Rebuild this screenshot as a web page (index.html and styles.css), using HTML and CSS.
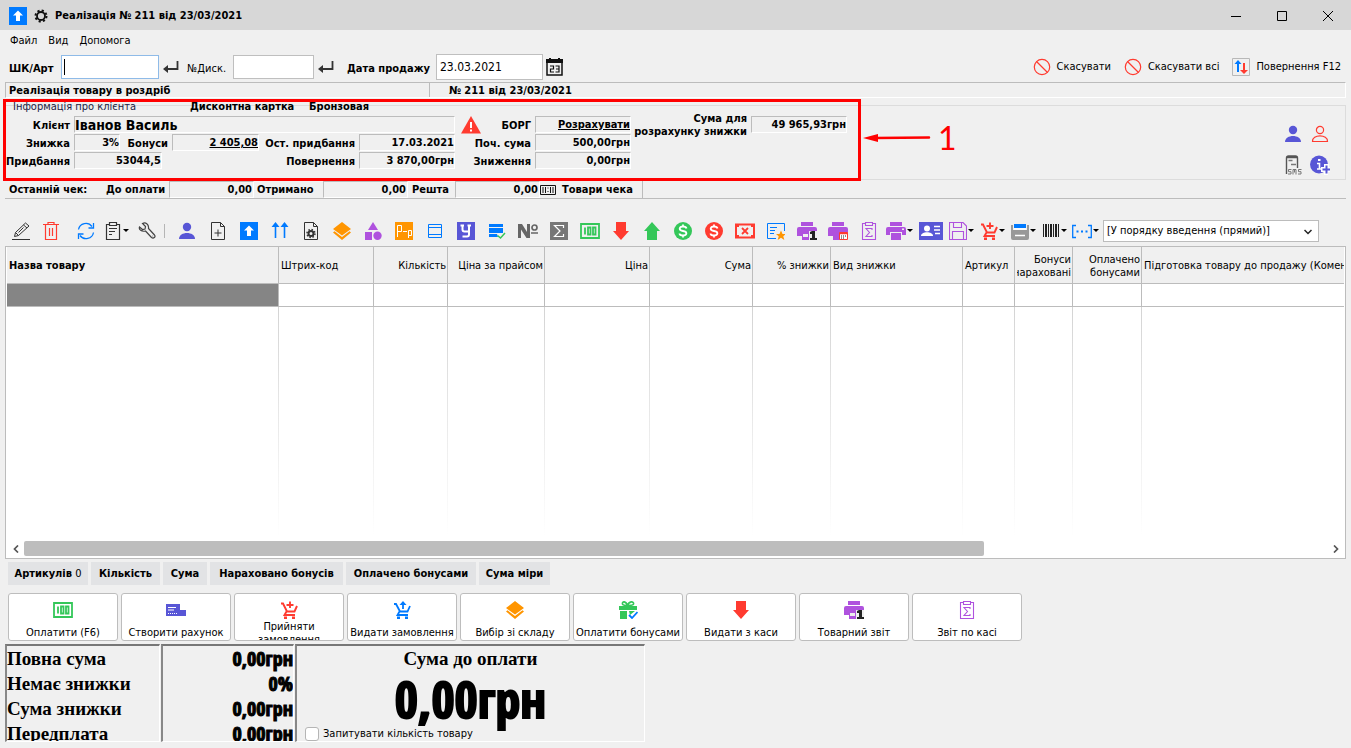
FILE: index.html
```html
<!DOCTYPE html>
<html lang="uk">
<head>
<meta charset="utf-8">
<title>Реалізація № 211 від 23/03/2021</title>
<link rel="stylesheet" href="styles.css">
</head>
<body>
<svg class="defs" aria-hidden="true">
  <symbol id="pencil" viewBox="0 0 18 18"><path d="M0 17.500h18M2.500 14.500l1-4L13.500 1l3.500 3L6.500 13.500zM3.500 10.500l3 3M11.500 3l3.500 3M6.500 10.500l5-5" fill="none" stroke="#333"/></symbol>
  <symbol id="trash" viewBox="0 0 18 18"><path d="M1 2.500h16M6 2V.500h6V2M3.500 3v14.500h11V3M7.500 6v8M10.500 6v8" fill="none" stroke="#ff3b30" stroke-width="1.200"/></symbol>
  <symbol id="refresh" viewBox="0 0 18 18"><path d="M1.500 7.500a7.500 7.500 0 0 1 13.500-3M16.500 1v5h-5M16.500 10.500a7.500 7.500 0 0 1-13.500 3M1.500 17v-5h5" fill="none" stroke="#007aff" stroke-width="1.300"/></symbol>
  <symbol id="clip" viewBox="0 0 18 18"><path d="M5 2.500H2.500v15h13v-15H13M5.500.500h7v3h-7zM5 6.500h8M5 9.500h6M5 12.500h3" fill="none" stroke="#333" stroke-width="1.200"/></symbol>
  <symbol id="wrench" viewBox="0 0 18 18"><path d="M1.500 5l3 2.500 2.500-.500.500-2.500-3-3c3-1.500 6.500.500 6 5l6 6.500c1.500 2-1 4-3 2.500l-6-6.500C3.500 10 .500 7.500 1.500 5zM14.500 14h.600" fill="none" stroke="#444" stroke-width="1.200"/></symbol>
  <symbol id="person" viewBox="0 0 18 18"><circle cx="9" cy="5" r="4.200"/><path d="M1 17c0-8 16-8 16 0z"/></symbol>
  <symbol id="person-line" viewBox="0 0 18 18"><circle cx="9" cy="5" r="3.600" fill="none"/><path d="M1.500 16.500c-.500-7.500 15.500-7.500 15 0z" fill="none"/></symbol>
  <symbol id="newpage" viewBox="0 0 18 18"><path d="M2.500.500h9l4 4v13h-13zM11.500.500v4h4M9 7.500v7M5.500 11h7" fill="none" stroke="#333"/></symbol>
  <symbol id="upbox" viewBox="0 0 18 18"><path fill="#007aff" d="M0 0h18v18H0z"/><path fill="#fff" d="M9 3.500l5 5h-3V14H7V8.500H4z"/></symbol>
  <symbol id="upup" viewBox="0 0 18 18"><path d="M4.500 2v14M13.500 2v14" stroke="#007aff" stroke-width="1.600"/><path fill="#007aff" d="M4.500 0l4 5h-8zM13.500 0l4 5h-8z"/></symbol>
  <symbol id="gearpage" viewBox="0 0 18 18"><path d="M2.500.500h9l4 4v13h-13zM11.500.500v4h4" fill="none" stroke="#333"/><circle cx="9" cy="11.500" r="2.500" fill="none" stroke="#333" stroke-width="2"/><circle cx="9" cy="11.500" r="4" fill="none" stroke="#333" stroke-width="1.500" stroke-dasharray="1.500 1.640"/></symbol>
  <symbol id="layers" viewBox="0 0 18 18"><path fill="#ff9500" d="M9 0l9 7-9 6.500L0 7zM0 10.500l1.500-1.200L9 15l7.500-5.700 1.500 1.200L9 18z"/></symbol>
  <symbol id="shapes" viewBox="0 0 18 18"><path fill="#af52de" d="M9 0l5 8H4zM1 10h7v8H1z"/><circle cx="13.500" cy="13.800" r="4.200" fill="#af52de"/></symbol>
  <symbol id="pp" viewBox="0 0 18 18"><path fill="#ff9500" d="M0 0h18v18H0z"/><path d="M2.500 15V3.500h4v6h-4M8 9.500h4M13.500 16V8.500h3v5h-3" fill="none" stroke="#fff"/></symbol>
  <symbol id="rows" viewBox="0 0 18 18"><path d="M2.500 2.500h13v13h-13zM2.500 5.500h13M2.500 12.500h13" fill="none" stroke="#007aff"/></symbol>
  <symbol id="ybox" viewBox="0 0 18 18"><path fill="#5856d6" d="M0 0h18v18H0z"/><path d="M5.500 3v4.500q0 2 2 2h3.500M12 3v9.500q0 2-2 2H5.500M3.500 3.500H7M10.500 3.500H14" fill="none" stroke="#fff" stroke-width="2"/></symbol>
  <symbol id="rowcheck" viewBox="0 0 18 18"><path fill="#007aff" d="M1 2h14v3H1zM1 6h14v5H1zM1 12h8l1 3H1z"/><path d="M9.500 13.500l3 2.500 4.500-5" fill="none" stroke="#34c759" stroke-width="1.500"/></symbol>
  <symbol id="num" viewBox="0 0 22 18"><path fill="#666" d="M1 2h4l5 8V2h3v14H9.500L4 7.500V16H1z"/><circle cx="17.500" cy="5.500" r="2.500" fill="none" stroke="#666" stroke-width="1.700"/><path d="M14 11h7" stroke="#666" stroke-width="1.500"/></symbol>
  <symbol id="sigma" viewBox="0 0 18 18"><path fill="#777" d="M0 0h18v18H0z"/><path d="M13.500 6V3.500h-9L10 9l-5.500 5.500h9V12" fill="none" stroke="#fff" stroke-width="1.200"/></symbol>
  <symbol id="cash" viewBox="0 0 20 18"><path d="M1 2h18v14H1zM5 5.500v7M8 5.500h2.500v7H8zM13 5.500h2.500v7H13z" fill="none" stroke="#34c759" stroke-width="1.800"/></symbol>
  <symbol id="down" viewBox="0 0 18 18"><path fill="#ff3b30" d="M4 0h10v9h3l-8 9-8-9h3z"/></symbol>
  <symbol id="up" viewBox="0 0 18 18"><path fill="#34c759" d="M9 0l8 9h-3v9H4V9H1z"/></symbol>
  <symbol id="dollar" viewBox="0 0 18 18"><circle cx="9" cy="9" r="9"/><path d="M12.500 6.500Q12 4.500 9 4.500T5.700 6.700Q5.700 8.500 9 9T12.400 11.300Q12.400 13.500 9 13.500T5.500 11.500M9 2.500v2M9 13.500v2" fill="none" stroke="#fff" stroke-width="1.800"/></symbol>
  <symbol id="cashx" viewBox="0 0 20 18"><path d="M1 2.500h18v13H1z" fill="none" stroke="#ff3b30" stroke-width="2"/><path fill="#ff3b30" d="M1 2h3v3H1zM16 2h3v3h-3zM1 13h3v3H1zM16 13h3v3h-3z"/><path d="M7 6l6 6M13 6l-6 6" stroke="#ff3b30" stroke-width="1.800"/></symbol>
  <symbol id="liststar" viewBox="0 0 18 18"><path d="M9 16.500H.500v-15h17V9M3 5.500h7M3 8.500h5M3 11.500h4" fill="none" stroke="#007aff"/><path fill="#ff9500" d="M14 8.500l1.500 3.500H19l-2.700 2.200 1 3.800-3.300-2.200-3.300 2.200 1-3.800L9 12h3.500z"/></symbol>
  <symbol id="printer" viewBox="0 0 20 18"><path fill="#af52de" d="M4 0h12v4H4zM2 5h16q2 0 2 2v6h-4v-3H4v3H0V7q0-2 2-2zM5 11h10v7H5z"/><path fill="#efefef" d="M16 6.500h2v1.500h-2z"/></symbol>
  <symbol id="printer1" viewBox="0 0 20 18"><path fill="#af52de" d="M4 0h12v4H4zM2 5h16q2 0 2 2v4h-6v7H5v-4H0V7q0-2 2-2z"/><path fill="#efefef" d="M6 12h5v3H6zM12 9h8v9h-8z"/><path fill="#222" d="M15 9h3v7h2v2h-7v-2h2v-4h-2v-2z"/></symbol>
  <symbol id="printercal" viewBox="0 0 20 18"><path fill="#af52de" d="M4 0h12v4H4zM2 5h16q2 0 2 2v4h-8v7H5v-4H0V7q0-2 2-2z"/><path fill="#fff" stroke="#ff3b30" d="M11.500 10.500h8v7h-8z"/><path d="M11 11.500h9" stroke="#ff3b30" stroke-width="1.500"/><path d="M13 14h5M13 16h3" stroke="#222" stroke-dasharray="1 1"/></symbol>
  <symbol id="clipsigma" viewBox="0 0 18 18"><path d="M5 1.500H2.500v16h13v-16H13M5.500 0.500h7v3h-7zM12 8V6.500H6L9.500 10.500 6 14.500h6V13" fill="none" stroke="#af52de" stroke-width="1.100"/></symbol>
  <symbol id="idcard" viewBox="0 0 24 18"><path fill="#5856d6" d="M0 0h24v18H0z"/><circle cx="8" cy="6.500" r="3" fill="#fff"/><path fill="#fff" d="M2 14c0-5 12-5 12 0z"/><path d="M15 4.500h6M15 8h6M16 11.500h5" stroke="#fff" stroke-width="1.500"/></symbol>
  <symbol id="floppy" viewBox="0 0 18 18"><path d="M.500.500H14l3.500 3.500v13.500H.500zM4.500.500v5h8v-5M3.500 17.500v-8h11v8" fill="none" stroke="#af52de" stroke-width="1.100"/></symbol>
  <symbol id="cart" viewBox="0 0 18 18"><path d="M1 2.500h2l4 8h7.500L17 5M6.500 10.500L4.500 14H15M10 .500v6.500M6.500 4h7" fill="none" stroke="#ff3b30" stroke-width="1.900"/><path fill="#ff3b30" d="M4 15.500h3V18H4zM12 15.500h3V18h-3z"/></symbol>
  <symbol id="cartup" viewBox="0 0 18 18"><path d="M1 3h2l4 7.500h7.500L17 5M6.500 10.500L4.500 14H15M10 2v6" fill="none" stroke="#007aff" stroke-width="1.800"/><path fill="#007aff" d="M10 0l3.500 4h-7zM4 15.500h3V18H4zM12 15.500h3V18h-3z"/></symbol>
  <symbol id="register" viewBox="0 0 18 18"><path fill="#999" d="M0 8h18v8q0 2-2 2H2q-2 0-2-2zM0 3h2v5H0zM16 3h2v5h-2z"/><path fill="#007aff" d="M3 2h12v4H3z"/><path d="M3 7h12" stroke="#fff" stroke-width="1.500"/><path d="M4 13.500h10" stroke="#fff" stroke-width="1.500"/></symbol>
  <symbol id="barcode" viewBox="0 0 18 18"><path fill="#222" d="M1 2h1v13H1zM3 2h2v13H3zM6 2h1v13H6zM8 2h2v13H8zM11 2h1v13h-1zM13 2h2v13h-2zM16 2h1v13h-1z"/></symbol>
  <symbol id="dots" viewBox="0 0 20 18"><path d="M4 3.500H.700v12H4M16 3.500h3.300v12H16" fill="none" stroke="#007aff" stroke-width="1.300"/><path d="M4.500 9.500h2M9 9.500h2M13.500 9.500h2" stroke="#007aff" stroke-width="2"/></symbol>
  <symbol id="invoice" viewBox="0 0 20 18"><path fill="#5856d6" d="M0 3h14v6h6v6H0z"/><path d="M2 6.500h8M2 9h6" stroke="#fff"/><path d="M2 12.500h10" stroke="#fff" stroke-dasharray="1 1"/></symbol>
  <symbol id="gift" viewBox="0 0 20 18"><path fill="#34c759" d="M1 5h18v4H1zM2 10h7v8H2zM11 10h6l-5 4z"/><path d="M9.500 4.500C8 0 4 0 4.500 3q.500 1.500 5 1.500C11 0 16 0 15.500 3q-.500 1.500-6 1.500" fill="none" stroke="#34c759" stroke-width="1.700"/><path d="M11 14l3 3 5.500-6" fill="none" stroke="#007aff" stroke-width="1.800"/></symbol>
  <symbol id="stop" viewBox="0 0 18 18"><circle cx="9" cy="9" r="7.700" fill="none" stroke="#ff3b30" stroke-width="1.200"/><path d="M3.500 3.500l11 11" stroke="#ff3b30" stroke-width="1.200"/></symbol>
  <symbol id="swap" viewBox="0 0 18 18"><path d="M.500.500h17v17H.500z" fill="none" stroke="#b8b8b8"/><path fill="#007aff" d="M6 2l3.500 4H7v8H5V6H2.500z"/><path fill="#ff3b30" d="M12 16l-4-4h3V5h2v7h3z"/></symbol>
  <symbol id="enter" viewBox="0 0 16 12"><path d="M14.500 0v8H4" fill="none" stroke="#333" stroke-width="1.800"/><path fill="#333" d="M0 8l5-4v8z"/></symbol>
  <symbol id="calendar" viewBox="0 0 17 18"><path d="M1 2h15v15H1z" fill="none" stroke="#111" stroke-width="1.500"/><path fill="#111" d="M0 1h17v4H0zM3 0h2v2H3zM12 0h2v2h-2z"/><path d="M4 8h3.500v3H4.500v3H8M9.500 8H13v6H9.500M10 11h3" fill="none" stroke="#111" stroke-width="1.200"/></symbol>
  <symbol id="gear" viewBox="0 0 14 14"><circle cx="7" cy="7" r="4" fill="none" stroke="#111" stroke-width="1.800"/><circle cx="7" cy="7" r="5.500" fill="none" stroke="#111" stroke-width="2" stroke-dasharray="2.160 2.160"/></symbol>
  <symbol id="sms" viewBox="0 0 18 20"><path d="M2.500 19V3Q2.500 1 4.500 1h7q2 0 2 2v10M2.500 2.500h11" fill="none" stroke="#555" stroke-width="1.400"/><path d="M4.500 5.500h4M7 9.500h5" stroke="#777" stroke-width="1.500"/><path d="M7.500 14.500h-3v2.200h2.500v2.300H4M9 19.500v-5h3v5M10.500 14.500v3M17.500 14.500h-3v2.200H17v2.300h-3" fill="none" stroke="#777"/></symbol>
  <symbol id="infoplus" viewBox="0 0 20 20"><circle cx="9" cy="9.500" r="9"/><path d="M7 8.500h2.500v5M7 14h5" stroke="#fff" stroke-width="1.600" fill="none"/><path fill="#fff" d="M8 4h2.500v2H8zM11 12h3v-3h5v3h1v5h-2v3h-4v-3h-3z"/><path d="M16.500 10.500v8M12.500 14.500h8" stroke="#5856d6" stroke-width="2"/></symbol>
  <symbol id="alert" viewBox="0 0 20 18"><path fill="#ff3b30" d="M10 0l10 17.500H0z"/><path fill="#fff" d="M9 6h2v6H9zM9 13.500h2v2H9z"/></symbol>
  <symbol id="slot" viewBox="0 0 16 10"><path d="M.500.500h15v9H.500zM3 2v6M5.500 2v6M10.500 2v6M13 2v6M8 2.500v1M8 6v1" fill="none" stroke="#111"/></symbol>
</svg>

<header class="titlebar">
  <svg class="i18"><use href="#upbox"/></svg>
  <svg class="i14"><use href="#gear"/></svg>
  <h1>Реалізація № 211 від 23/03/2021</h1>
  <div class="winctl">
    <button aria-label="Згорнути"><svg viewBox="0 0 12 12"><path d="M1 6.500h10"/></svg></button>
    <button aria-label="Розгорнути"><svg viewBox="0 0 12 12"><path d="M1.500 1.500h9v9h-9z"/></svg></button>
    <button aria-label="Закрити"><svg viewBox="0 0 12 12"><path d="M1 1l10 10M11 1L1 11"/></svg></button>
  </div>
</header>

<nav class="menu"><button>Файл</button><button>Вид</button><button>Допомога</button></nav>

<div class="entry">
  <label class="b w-art" for="art">ШК/Арт</label><div class="field"><input id="art" class="in active" value=""><i class="caret"></i></div>
  <button class="ent" aria-label="Ввести артикул"><svg><use href="#enter"/></svg></button>
  <label class="w-disc" for="disc">№Диск.</label><input id="disc" class="in disc" value="">
  <button class="ent" aria-label="Ввести картку"><svg><use href="#enter"/></svg></button>
  <label class="b w-date" for="date">Дата продажу</label><input id="date" class="in date" value="23.03.2021">
  <button class="cal" aria-label="Календар"><svg><use href="#calendar"/></svg></button>
  <div class="cmds">
    <button><svg class="i18"><use href="#stop"/></svg>Скасувати</button>
    <button><svg class="i18"><use href="#stop"/></svg>Скасувати всі</button>
    <button><svg class="i18"><use href="#swap"/></svg>Повернення F12</button>
  </div>
</div>

<div class="docline b"><span class="kind">Реалізація товару в роздріб</span><span class="docno">№ 211 від 23/03/2021</span></div>

<section class="client">
  <div class="caption"><span class="cap">Інформація про клієнта</span><span class="card b">Дисконтна картка</span><span class="b">Бронзовая</span></div>
  <div class="info b">
    <span class="l c1 r1">Клієнт</span><span class="f name">Іванов Василь</span>
    <svg class="alert"><use href="#alert"/></svg>
    <span class="l c7 r1">БОРГ</span><a class="f c8 r1" href="#debt">Розрахувати</a>
    <span class="l c9">Сума для<br>розрахунку знижки</span><span class="f c10 r1">49 965,93грн</span>
    <span class="l c1 r2">Знижка</span><span class="f c2 r2">3%</span>
    <span class="l c3 r2">Бонуси</span><a class="f c4 r2" href="#bonus">2 405,08</a>
    <span class="l c5 r2">Ост. придбання</span><span class="f c6 r2">17.03.2021</span>
    <span class="l c7 r2">Поч. сума</span><span class="f c8 r2">500,00грн</span>
    <span class="l c1 r3">Придбання</span><span class="f bought">53044,5</span>
    <span class="l c5 r3">Повернення</span><span class="f c6 r3">3 870,00грн</span>
    <span class="l c7 r3">Зниження</span><span class="f c8 r3">0,00грн</span>
  </div>
  <div class="side">
    <button aria-label="Клієнт"><svg class="i18 violet"><use href="#person"/></svg></button>
    <button aria-label="Без клієнта"><svg class="i18 redline"><use href="#person-line"/></svg></button>
    <button aria-label="SMS"><svg class="sms"><use href="#sms"/></svg></button>
    <button aria-label="Додати відомості"><svg class="i20 violet"><use href="#infoplus"/></svg></button>
  </div>
  <div class="mark"></div>
  <svg class="arrow" viewBox="0 0 70 12"><path d="M66 5.500L12 6" stroke="red" stroke-width="2.500" stroke-linecap="round"/><path d="M0 6l15-4v8z" fill="red"/></svg>
  <span class="markno">1</span>
</section>

<div class="last b">
  <span class="lk">Останній чек:</span><span class="lk2">До оплати</span><span class="f v1">0,00</span><span class="lk3">Отримано</span><span class="f v2">0,00</span><span class="lk4">Решта</span><span class="f v3">0,00</span>
  <button class="goods b"><svg><use href="#slot"/></svg>Товари чека</button>
</div>

<div class="tools">
  <button aria-label="Редагувати"><svg class="i18"><use href="#pencil"/></svg></button>
  <button class="tight" aria-label="Видалити"><svg class="i18"><use href="#trash"/></svg></button>
  <button class="gap" aria-label="Оновити"><svg class="i18"><use href="#refresh"/></svg></button>
  <button class="drop" aria-label="Буфер"><svg class="i18"><use href="#clip"/></svg></button>
  <button class="tight" aria-label="Налаштування"><svg class="i18"><use href="#wrench"/></svg></button>
  <i class="sep"></i>
  <button aria-label="Клієнт"><svg class="i18 violet"><use href="#person"/></svg></button>
  <button aria-label="Новий"><svg class="i18"><use href="#newpage"/></svg></button>
  <button aria-label="Вгору"><svg class="i18"><use href="#upbox"/></svg></button>
  <button aria-label="Усі вгору"><svg class="i18"><use href="#upup"/></svg></button>
  <button aria-label="Параметри"><svg class="i18"><use href="#gearpage"/></svg></button>
  <button aria-label="Склад"><svg class="i18"><use href="#layers"/></svg></button>
  <button aria-label="Фігури"><svg class="i18"><use href="#shapes"/></svg></button>
  <button aria-label="Р-р"><svg class="i18"><use href="#pp"/></svg></button>
  <button aria-label="Рядки"><svg class="i18"><use href="#rows"/></svg></button>
  <button aria-label="У"><svg class="i18"><use href="#ybox"/></svg></button>
  <button aria-label="Позначити"><svg class="i18"><use href="#rowcheck"/></svg></button>
  <button aria-label="Номер"><svg class="i22"><use href="#num"/></svg></button>
  <button aria-label="Підсумок"><svg class="i18"><use href="#sigma"/></svg></button>
  <button aria-label="Готівка"><svg class="i20"><use href="#cash"/></svg></button>
  <button aria-label="Видати"><svg class="i18"><use href="#down"/></svg></button>
  <button aria-label="Внести"><svg class="i18"><use href="#up"/></svg></button>
  <button aria-label="Прибуток"><svg class="i18 green"><use href="#dollar"/></svg></button>
  <button aria-label="Витрата"><svg class="i18 red"><use href="#dollar"/></svg></button>
  <button aria-label="Скасувати оплату"><svg class="i20"><use href="#cashx"/></svg></button>
  <button aria-label="Обране"><svg class="i18"><use href="#liststar"/></svg></button>
  <button aria-label="Друк 1"><svg class="i20"><use href="#printer1"/></svg></button>
  <button aria-label="Друк за датою"><svg class="i20"><use href="#printercal"/></svg></button>
  <button aria-label="Звіт"><svg class="i18"><use href="#clipsigma"/></svg></button>
  <button class="drop" aria-label="Друк"><svg class="i20"><use href="#printer"/></svg></button>
  <button aria-label="Картка"><svg class="i24"><use href="#idcard"/></svg></button>
  <button class="drop" aria-label="Зберегти"><svg class="i18"><use href="#floppy"/></svg></button>
  <button class="drop" aria-label="Кошик"><svg class="i18"><use href="#cart"/></svg></button>
  <button class="drop" aria-label="Каса"><svg class="i18"><use href="#register"/></svg></button>
  <button class="drop" aria-label="Штрих-код"><svg class="i18"><use href="#barcode"/></svg></button>
  <button class="drop" aria-label="Ще"><svg class="i20"><use href="#dots"/></svg></button>
  <div class="order"><select aria-label="Порядок"><option>[У порядку введення (прямий)]</option></select><svg viewBox="0 0 8 6"><path d="M.500 1L4 4.500 7.500 1"/></svg></div>
</div>

<main class="grid">
  <table>
    <colgroup><col class="k1"><col class="k2"><col class="k3"><col class="k4"><col class="k5"><col class="k6"><col class="k7"><col class="k8"><col class="k9"><col class="k10"><col class="k11"><col></colgroup>
    <thead><tr><th class="b">Назва товару</th><th>Штрих-код</th><th class="r">Кількість</th><th class="r">Ціна за прайсом</th><th class="r">Ціна</th><th class="r">Сума</th><th class="r">% знижки</th><th>Вид знижки</th><th>Артикул</th><th class="r"><div class="cut">Бонуси<br>нараховані</div></th><th class="r">Оплачено<br>бонусами</th><th>Підготовка товару до продажу (Коментар)</th></tr></thead>
    <tbody>
      <tr class="row"><td class="sel"></td><td></td><td></td><td></td><td></td><td></td><td></td><td></td><td></td><td></td><td></td><td></td></tr>
      <tr class="rest"><td></td><td></td><td></td><td></td><td></td><td></td><td></td><td></td><td></td><td></td><td></td><td></td></tr>
    </tbody>
  </table>
  <div class="scroll">
    <button aria-label="Ліворуч"><svg viewBox="0 0 6 8"><path d="M5 .500L1.500 4 5 7.500"/></svg></button>
    <div class="track"><div class="thumb"></div></div>
    <button aria-label="Праворуч"><svg viewBox="0 0 6 8"><path d="M1 .500L4.500 4 1 7.500"/></svg></button>
  </div>
</main>

<div class="chips"><span class="s1"><b>Артикулів</b> 0</span><span class="s2"><b>Кількість</b></span><span class="s3"><b>Сума</b></span><span class="s4"><b>Нараховано бонусів</b></span><span class="s5"><b>Оплачено бонусами</b></span><span class="s6"><b>Сума міри</b></span></div>

<div class="actions">
  <button><svg class="i20"><use href="#cash"/></svg><span>Оплатити (F6)</span></button>
  <button><svg class="i20"><use href="#invoice"/></svg><span>Створити рахунок</span></button>
  <button class="two"><svg class="i18"><use href="#cart"/></svg><span>Прийняти<br>замовлення</span></button>
  <button><svg class="i18"><use href="#cartup"/></svg><span>Видати замовлення</span></button>
  <button><svg class="i18"><use href="#layers"/></svg><span>Вибір зі складу</span></button>
  <button><svg class="i20"><use href="#gift"/></svg><span>Оплатити бонусами</span></button>
  <button><svg class="i18"><use href="#down"/></svg><span>Видати з каси</span></button>
  <button><svg class="i20"><use href="#printer1"/></svg><span>Товарний звіт</span></button>
  <button><svg class="i18"><use href="#clipsigma"/></svg><span>Звіт по касі</span></button>
</div>

<footer class="totals">
  <div class="pane names"><p>Повна сума</p><p>Немає знижки</p><p>Сума знижки</p><p>Передплата</p></div>
  <div class="pane sums"><p>0,00грн</p><p>0%</p><p>0,00грн</p><p>0,00грн</p></div>
  <div class="pane due"><h2>Сума до оплати</h2><p class="big">0,00грн</p><label><input type="checkbox">Запитувати кількість товару</label></div>
</footer>
</body>
</html>
```
FILE: styles.css
```css
* { box-sizing: border-box; }
body {
  margin: 0;
  min-height: 100vh;
  background: #f0f0f0;
  color: #000;
  font: 11px/14px "DejaVu Sans Condensed", "Noto Sans", sans-serif;
  overflow: hidden;
}
button, input, select { font: inherit; color: inherit; }
button { background: none; border: 0; padding: 0; margin: 0; }
svg { display: block; flex: none; }
p, h1, h2 { margin: 0; }
.b { font-weight: bold; }
.defs { position: absolute; width: 0; height: 0; }
.i14 { width: 14px; height: 14px; }
.i18 { width: 18px; height: 18px; }
.i20 { width: 20px; height: 18px; }
.i22 { width: 22px; height: 18px; }
.i24 { width: 24px; height: 18px; }
.violet { fill: #5856d6; }
.green { fill: #34c759; }
.red { fill: #ff3b30; }
.redline { stroke: #ff3b30; stroke-width: 1.2; }

.titlebar { display: flex; align-items: center; gap: 7px; height: 30px; padding: 1px 0 0 9px; background: #d7d7d7; }
.titlebar h1 { font-size: 11px; line-height: 14px; font-weight: bold; }
.winctl { margin-left: auto; display: flex; }
.winctl button { width: 46px; height: 30px; display: grid; place-items: center; }
.winctl svg { width: 12px; height: 12px; fill: none; stroke: #000; }

.menu { display: flex; gap: 11px; padding: 0 10px; height: 21px; }
.menu button { line-height: 20px; }

.entry { display: flex; align-items: center; height: 31px; padding-left: 9px; }
.entry label { padding-top: 4px; white-space: nowrap; }
.w-art { width: 52px; }
.w-disc { width: 46px; }
.w-date { width: 89px; margin-left: 5px; }
.in { display: block; height: 24px; width: 98px; padding: 0 4px; border: 1px solid #bfbfbf; background: #fff; outline: 0; font-size: 12px; }
.field { position: relative; }
.caret { position: absolute; left: 3px; top: 4px; width: 1px; height: 16px; background: #000; }
.in.active { border-color: #8fbbe8; }
.in.disc { width: 81px; }
.in.date { width: 107px; height: 26px; padding: 0 3px; }
.ent { padding: 0 8px 0 4px; }
.ent svg { width: 16px; height: 12px; }
.cal { margin-left: 3px; }
.cal svg { width: 17px; height: 18px; }
.cmds { display: flex; gap: 13px; margin-left: auto; padding-right: 10px; }
.cmds button { display: flex; align-items: center; gap: 6px; white-space: nowrap; }

.docline { display: flex; height: 16px; margin: 0 5px; border: 1px solid #fff; border-top-color: #bcbcbc; border-left-color: #bcbcbc; line-height: 15px; padding-left: 3px; }
.kind { width: 421px; border-right: 1px solid #bcbcbc; }
.docno { padding-left: 19px; }

.client { position: relative; display: flex; margin: 7px 5px 0; height: 75px; border: 1px solid #dcdcdc; }
.caption { position: absolute; left: 7px; top: -6px; display: flex; gap: 10px; line-height: 14px; }
.caption .cap { width: 167px; color: #222244; }
.caption .card { width: 109px; }
.info { display: grid; grid-template-columns: 68px 46px 52px 87px 100px 96px 80px 96px 120px 96px; grid-template-rows: 18px 18px 18px; padding-top: 10px; }
.l { text-align: right; padding: 3px 4px 0 0; white-space: nowrap; line-height: 14px; }
.f { height: 17px; border: 1px solid #fff; border-top-color: #bcbcbc; border-left-color: #bcbcbc; text-align: right; line-height: 16px; white-space: nowrap; color: inherit; }
.c1 { grid-column: 1; } .c2 { grid-column: 2; } .c3 { grid-column: 3; } .c4 { grid-column: 4; } .c5 { grid-column: 5; }
.c6 { grid-column: 6; } .c7 { grid-column: 7; } .c8 { grid-column: 8; } .c10 { grid-column: 10; }
.r1 { grid-row: 1; } .r2 { grid-row: 2; } .r3 { grid-row: 3; }
.name { grid-column: 2 / 7; grid-row: 1; text-align: left; font-size: 14px; }
.alert { grid-column: 7; grid-row: 1; width: 20px; height: 18px; margin-left: 6px; }
.c9 { grid-column: 9; grid-row: 1 / 3; line-height: 13px; padding-top: 0; margin-top: -4px; }
.bought { grid-column: 2 / 4; grid-row: 3; width: 88px; }
.side { margin-left: auto; display: grid; grid-template-columns: 27px 27px; grid-template-rows: 31px 31px; padding: 12px 12px 0 0; place-items: center; }
.side .i20, .sms { width: 20px; height: 20px; }
.mark { position: absolute; left: -3px; top: -7px; width: 858px; height: 82px; border: 3px solid red; }
.arrow { position: absolute; left: 857px; top: 26px; width: 70px; height: 12px; }
.markno { position: absolute; left: 932px; top: 16px; font: 32px/32px Lato, sans-serif; color: red; }

.last { display: flex; height: 18px; margin: 1px 5px 0; padding-left: 4px; border-bottom: 1px solid #bcbcbc; line-height: 17px; white-space: nowrap; }
.last .f { padding-right: 1px; }
.lk { width: 97px; } .lk2 { width: 63px; } .v1 { width: 85px; } .lk3 { width: 69px; padding-left: 3px; }
.v2 { width: 85px; } .lk4 { width: 47px; padding-left: 4px; } .v3 { width: 85px; }
.goods { display: flex; align-items: center; gap: 6px; width: 103px; border-right: 1px solid #bcbcbc; }
.goods svg { width: 16px; height: 10px; }

.tools { display: flex; align-items: center; margin: 16px 5px 0; height: 31px; }
.tools button { width: 31px; height: 30px; display: flex; align-items: center; justify-content: center; flex: none; }
.tools .tight { width: 30px; }
.tools .gap { margin-left: 4px; }
.tools .drop { gap: 1px; }
.tools .drop::after { content: ""; border: 3px solid transparent; border-top-color: #000; border-bottom: 0; }
.sep { width: 1px; height: 14px; background: #b5b5b5; margin: 0 6px 0 2px; }
.order { position: relative; width: 216px; height: 22px; margin-left: 2px; }
.order select { width: 100%; height: 22px; padding: 0 3px; border: 1px solid #bcbcbc; border-radius: 0; background: #fff; appearance: none; }
.order svg { position: absolute; right: 7px; top: 9px; width: 8px; height: 6px; fill: none; stroke: #222; stroke-width: 1.5; pointer-events: none; }

.grid { margin: 0 5px; padding: 0 1px; border: 1px solid #bcbcbc; background: #fff; overflow: hidden; }
table { width: 100%; table-layout: fixed; border-collapse: separate; border-spacing: 0; }
.k1 { width: 272px; } .k2 { width: 95px; } .k3 { width: 74px; } .k4 { width: 97px; } .k5 { width: 105px; } .k6 { width: 103px; }
.k7 { width: 78px; } .k8 { width: 132px; } .k9 { width: 52px; } .k10 { width: 58px; } .k11 { width: 69px; }
th { height: 37px; padding: 1px 2px 0; background: #f0f0f0; border: 0 solid #bcbcbc; border-width: 0 1px 1px 0; font-weight: normal; text-align: left; white-space: nowrap; overflow: hidden; line-height: 13px; }
th.b { font-weight: bold; }
th.r { text-align: right; padding-right: 1px; }
.cut { display: flex; justify-content: flex-end; overflow: hidden; }
td { padding: 0; border: 0 solid #bcbcbc; border-width: 0 1px 1px 0; }
th:last-child, td:last-child { border-right: 0; }
.row td { height: 23px; }
.sel { background: #858585; }
.rest td { height: 234px; border: 0; background: linear-gradient(#d4d4d4, #fff 98%) right / 1px 100% no-repeat; }
.rest td:last-child { background: none; }
.scroll { display: flex; height: 17px; padding-bottom: 2px; }
.scroll button { width: 17px; display: grid; place-items: center; }
.scroll svg { width: 6px; height: 8px; fill: none; stroke: #555; stroke-width: 1.7; }
.track { flex: 1; }
.thumb { width: 74%; max-width: 960px; height: 15px; border-radius: 2px; background: #bdbdbd; }

.chips { display: flex; gap: 3px; padding: 3px 8px 0; }
.chips span { height: 23px; line-height: 24px; background: #e2e3e5; white-space: nowrap; text-align: center; }
.s1 { width: 80px; } .s2 { width: 69px; } .s3 { width: 44px; } .s4 { width: 133px; } .s5 { width: 130px; } .s6 { width: 71px; }

.actions { display: flex; gap: 3px; padding: 8px 8px 0; }
.actions button { width: 110px; height: 48px; padding-top: 7px; display: flex; flex-direction: column; align-items: center; gap: 7px; background: #fff; border: 1px solid #bdbdbd; border-radius: 3px; overflow: hidden; line-height: 14px; white-space: nowrap; }
.actions .two { gap: 1px; line-height: 13px; }

.totals { display: flex; gap: 1px; padding: 3px 5px 0; }
.pane { height: 98px; border: 2px solid #fff; border-top-color: #777; border-left-color: #888; border-right-width: 1px; border-bottom-width: 1px; overflow: hidden; }
.names { width: 155px; font: bold 19px/25px "Liberation Serif", serif; }
.sums { width: 133px; text-align: right; font: bold 20px/25px Impact, "Open Sans Condensed", "Roboto Condensed", "Noto Sans ExtraCondensed", "Liberation Sans", sans-serif; -webkit-text-stroke: 1px #000; }
.due { width: 350px; }
.due h2 { text-align: center; font: bold 19px/25px "Liberation Serif", serif; }
.big { text-align: center; font: bold 50px/56px Impact, "Open Sans Condensed", "Roboto Condensed", "Noto Sans ExtraCondensed", "Liberation Sans", sans-serif; -webkit-text-stroke: 2px #000; }
.due label { display: flex; align-items: center; gap: 4px; padding-left: 8px; }
.due input { appearance: none; width: 14px; height: 14px; margin: 0; border: 1px solid #b5b5b5; border-radius: 3px; background: #fff; }
```
